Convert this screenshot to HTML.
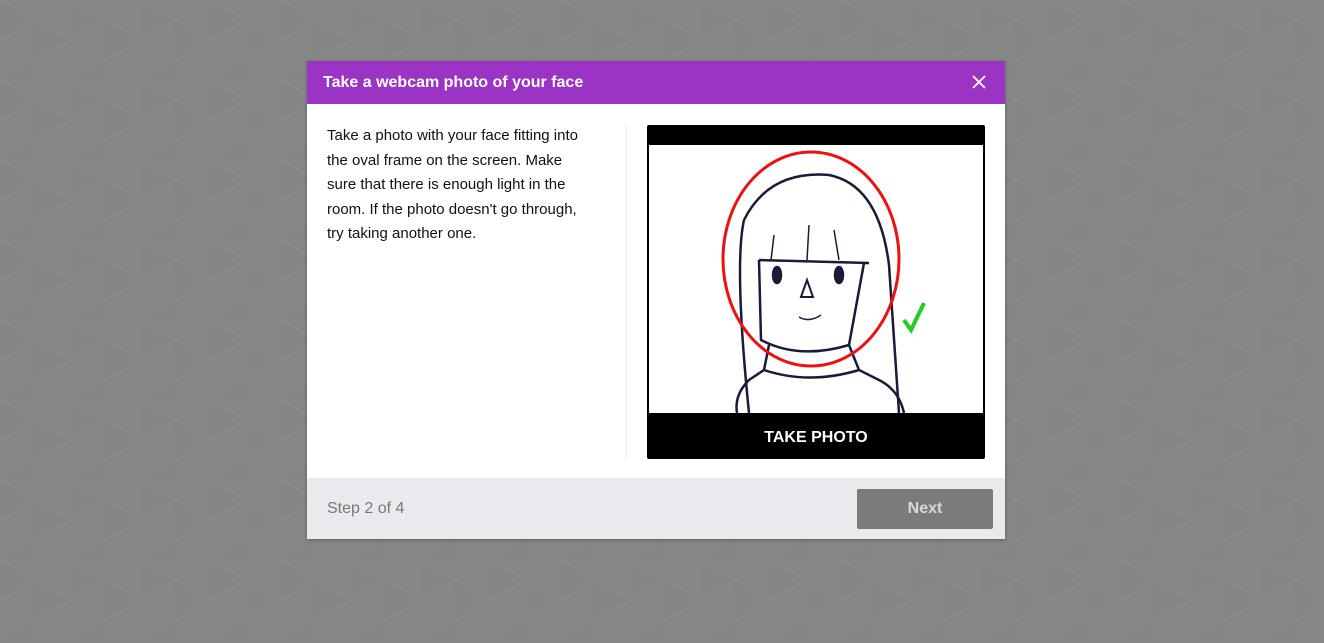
<!DOCTYPE html>
<html><head><style>
body{margin:0;width:1324px;height:643px;background:#878787;font-family:"Liberation Sans",Arial,sans-serif;position:relative;overflow:hidden}
.bg{position:absolute;inset:0}
.modal{position:absolute;left:307px;top:61px;width:698px;height:478px;background:#fff;box-shadow:0 1px 4px rgba(0,0,0,.3)}
.hd{height:43px;background:#9b33c4;color:#fff;font-weight:bold;font-size:16px;line-height:43px;padding-left:16px;position:relative}
.x{position:absolute;right:19px;top:14px}
.txt{position:absolute;left:20px;top:63px;width:268px;font-size:15px;line-height:24.5px;color:#111}
.div{position:absolute;left:319px;top:64px;width:1px;height:334px;background:#ececec}
.cam{position:absolute;left:340px;top:64px;width:338px;height:334px;background:#000;border-radius:2px;overflow:hidden}
.img{position:absolute;left:2px;top:20px;width:334px;height:268px;background:#fff}
.tp{position:absolute;left:0;bottom:0;width:100%;height:42px;color:#fff;font-weight:bold;font-size:16px;text-align:center;line-height:42px}
.ft{position:absolute;left:0;bottom:0;width:100%;height:61px;background:#e9eaed}
.step{position:absolute;left:20px;top:22px;font-size:16px;color:#777}
.next{position:absolute;right:12px;top:11px;width:136px;height:40px;background:#7b7b7b;border-radius:2px;color:#d8d8d8;font-weight:bold;font-size:16px;text-align:center;line-height:40px}
</style></head><body>
<svg class="bg" width="1324" height="643"><defs><pattern id="p" width="70" height="80" patternUnits="userSpaceOnUse"><path d="M0 0L35 20L0 40Z M35 20L70 40L35 60Z M35 60L0 80L35 100Z" fill="#808080" opacity=".35"/><path d="M0 0L70 40M0 40L35 20M35 60L70 40" stroke="#8c8c8c" stroke-width="1" fill="none"/></pattern></defs><rect width="1324" height="643" fill="url(#p)"/></svg>
<div class="modal">
<div class="hd">Take a webcam photo of your face<svg class="x" width="14" height="14"><path d="M1 1L13 13M13 1L1 13" stroke="#fff" stroke-width="1.8"/></svg></div>
<div class="txt">Take a photo with your face fitting into the oval frame on the screen. Make sure that there is enough light in the room. If the photo doesn't go through, try taking another one.</div>
<div class="div"></div>
<div class="cam"><div class="img">
<svg width="334" height="268" fill="none" stroke="#1a1a3a" stroke-width="2.5">
<path d="M95 75Q120 25 180 30Q230 40 240 120L250 268M95 75Q85 120 100 268"/>
<path d="M110 115L220 118M110 115L112 195Q150 215 200 200L215 118"/>
<path d="M120 200L115 225L100 235Q85 250 88 268M200 200L210 225L230 235Q250 245 255 268"/>
<path d="M115 225Q160 240 210 225"/>
<path d="M152 152L158 135L164 152Z" stroke-width="2"/>
<path d="M150 172Q160 178 172 170" stroke-width="1.5"/>
<ellipse cx="128" cy="130" rx="4" ry="8" fill="#1a1a3a"/><ellipse cx="190" cy="130" rx="4" ry="8" fill="#1a1a3a"/>
<path d="M125 90L122 115M160 80L158 115M185 85L190 115" stroke-width="1.5"/>
<ellipse cx="162" cy="114" rx="88" ry="107" stroke="#e11" stroke-width="3"/>
<path d="M255 175L262 185L275 158" stroke="#2c2" stroke-width="4"/>
</svg></div><div class="tp">TAKE PHOTO</div></div>
<div class="ft"><div class="step">Step 2 of 4</div><div class="next">Next</div></div>
</div>
</body></html>
